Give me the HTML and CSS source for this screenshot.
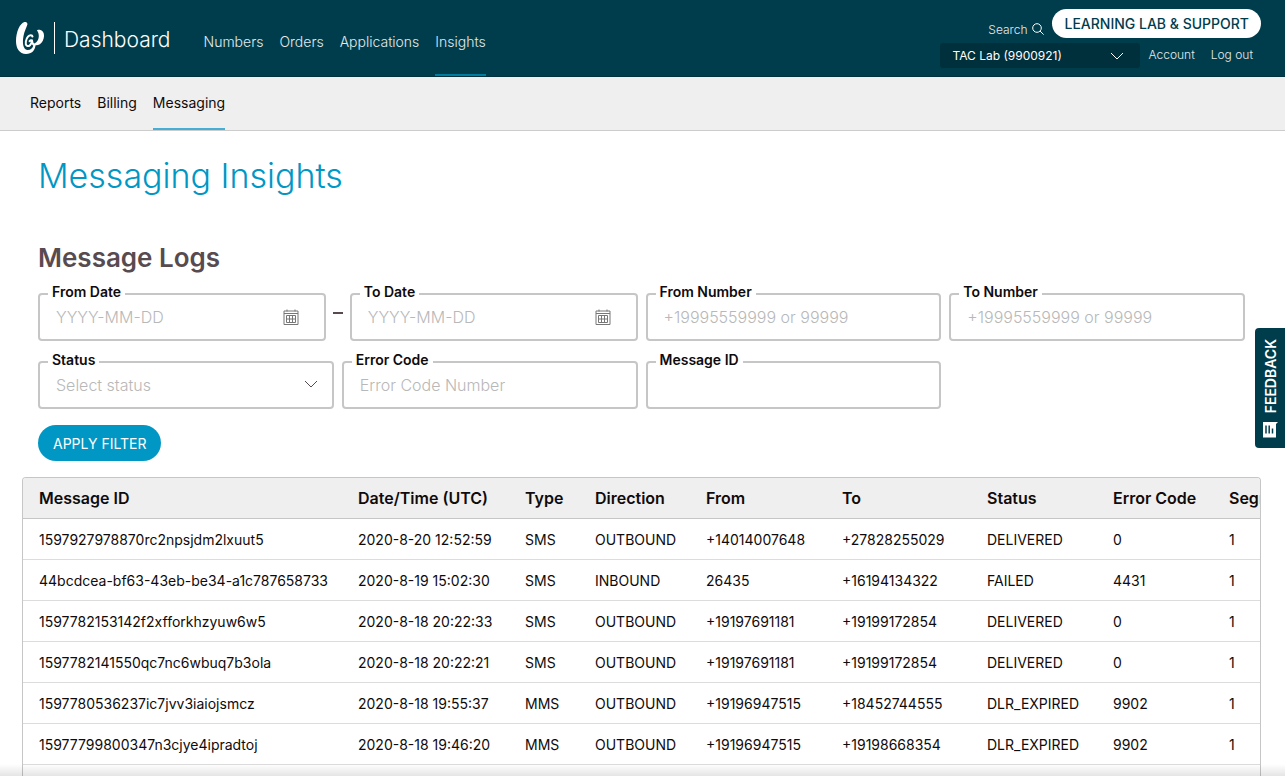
FILE: index.html
```html
<!DOCTYPE html>
<html lang="en">
<head>
<meta charset="utf-8">
<meta name="viewport" content="width=device-width, initial-scale=1">
<title>Messaging Insights</title>
<link rel="stylesheet" href="styles.css">
</head>
<body>
<header class="topbar">
  <a class="brand" href="#">
    <svg class="brand-logo" viewBox="0 0 30 34" aria-hidden="true">
      <path fill="#fff" d="M9.500 1C5 2 1 11 1 20c0 7.500 3.500 13 10 13 6 0 9.300-4 9.500-9h-2c-.8 3.500-3.500 5.300-6.200 5-4.300-.8-5.100-7-3.800-14 .9-5 3.100-8.500 3.900-11.500C12.600 1.500 11.500.6 9.500 1z"/>
      <path fill="#fff" d="M22 9.500c2.400 3 2.300 7.500.3 10.500-1.200 1.800-2.800 2.800-4.800 3.200 3.500 2.300 8.200.8 10.200-3.200 2.600-5 1.300-10.700-2.900-11.300-1.400-.2-2.800 0-2.800.8z"/>
      <path fill="none" stroke="#fff" stroke-width="2" stroke-linecap="round" d="M17.500 15.500c-.3-1.700-2.800-1.800-4.500.2-2.200 2.500-3.200 7.600-1.200 9 2 1.300 4.700-1 5.200-5.200-.8-.3-1.800 0-2.400.7M17 19.500c.2 2.500.2 3.800 2.500 4.500"/>
    </svg>
    <span class="brand-name">Dashboard</span>
  </a>
  <nav class="main-nav" aria-label="Main">
    <a href="#">Numbers</a>
    <a href="#">Orders</a>
    <a href="#">Applications</a>
    <a class="active" href="#">Insights</a>
  </nav>
  <div class="tools">
    <div class="tools-row">
      <a class="search" href="#">Search
        <svg class="search-icon" viewBox="0 0 12 12" aria-hidden="true"><circle cx="5" cy="5" r="4.300"/><path d="M8 8l3.600 3.600"/></svg>
      </a>
      <button class="support" type="button">LEARNING LAB &amp; SUPPORT</button>
    </div>
    <div class="tools-row account-row">
      <div class="account-picker">
        <select aria-label="Account"><option>TAC Lab (9900921)</option></select>
        <svg class="chevron" viewBox="0 0 14 8" aria-hidden="true"><path d="M1 1l6 6 6-6"/></svg>
      </div>
      <a href="#">Account</a>
      <a class="logout" href="#">Log out</a>
    </div>
  </div>
</header>

<nav class="sub-nav" aria-label="Insights">
  <a href="#">Reports</a>
  <a href="#">Billing</a>
  <a class="active" href="#">Messaging</a>
</nav>

<main class="content">
  <h1>Messaging Insights</h1>
  <h2>Message Logs</h2>

  <form class="filters">
    <div class="date-range">
      <div class="field">
        <label for="from-date">From Date</label>
        <input id="from-date" type="text" placeholder="YYYY-MM-DD">
        <button class="calendar" type="button" aria-label="Pick from date">
          <svg viewBox="0 0 16 16" aria-hidden="true"><path d="M1 2h14v13.500H1zM1 4.500h14M4 .5v2M12 .5v2M3.500 6.500h9v7h-9zM3.500 10h9M6.500 6.500v7M9.500 6.500v7"/></svg>
        </button>
      </div>
      <span class="dash"></span>
      <div class="field">
        <label for="to-date">To Date</label>
        <input id="to-date" type="text" placeholder="YYYY-MM-DD">
        <button class="calendar" type="button" aria-label="Pick to date">
          <svg viewBox="0 0 16 16" aria-hidden="true"><path d="M1 2h14v13.500H1zM1 4.500h14M4 .5v2M12 .5v2M3.500 6.500h9v7h-9zM3.500 10h9M6.500 6.500v7M9.500 6.500v7"/></svg>
        </button>
      </div>
    </div>
    <div class="field">
      <label for="from-number">From Number</label>
      <input id="from-number" type="text" placeholder="+19995559999 or 99999">
    </div>
    <div class="field">
      <label for="to-number">To Number</label>
      <input id="to-number" type="text" placeholder="+19995559999 or 99999">
    </div>
    <div class="field">
      <label for="status">Status</label>
      <select id="status"><option>Select status</option></select>
      <svg class="chevron" viewBox="0 0 14 8" aria-hidden="true"><path d="M1 1l6 6 6-6"/></svg>
    </div>
    <div class="field">
      <label for="error-code">Error Code</label>
      <input id="error-code" type="text" placeholder="Error Code Number">
    </div>
    <div class="field">
      <label for="message-id">Message ID</label>
      <input id="message-id" type="text">
    </div>
    <button class="apply" type="submit">APPLY FILTER</button>
  </form>

  <div class="table-frame">
    <table>
      <colgroup>
        <col class="c-id"><col class="c-time"><col class="c-type"><col class="c-direction"><col class="c-from"><col class="c-to"><col class="c-status"><col class="c-error"><col class="c-segments">
      </colgroup>
      <thead>
        <tr><th>Message ID</th><th>Date/Time (UTC)</th><th>Type</th><th>Direction</th><th>From</th><th>To</th><th>Status</th><th>Error Code</th><th>Segments</th></tr>
      </thead>
      <tbody>
        <tr><td>1597927978870rc2npsjdm2lxuut5</td><td>2020-8-20 12:52:59</td><td>SMS</td><td>OUTBOUND</td><td>+14014007648</td><td>+27828255029</td><td>DELIVERED</td><td>0</td><td>1</td></tr>
        <tr><td>44bcdcea-bf63-43eb-be34-a1c787658733</td><td>2020-8-19 15:02:30</td><td>SMS</td><td>INBOUND</td><td>26435</td><td>+16194134322</td><td>FAILED</td><td>4431</td><td>1</td></tr>
        <tr><td>1597782153142f2xfforkhzyuw6w5</td><td>2020-8-18 20:22:33</td><td>SMS</td><td>OUTBOUND</td><td>+19197691181</td><td>+19199172854</td><td>DELIVERED</td><td>0</td><td>1</td></tr>
        <tr><td>1597782141550qc7nc6wbuq7b3ola</td><td>2020-8-18 20:22:21</td><td>SMS</td><td>OUTBOUND</td><td>+19197691181</td><td>+19199172854</td><td>DELIVERED</td><td>0</td><td>1</td></tr>
        <tr><td>1597780536237ic7jvv3iaiojsmcz</td><td>2020-8-18 19:55:37</td><td>MMS</td><td>OUTBOUND</td><td>+19196947515</td><td>+18452744555</td><td>DLR_EXPIRED</td><td>9902</td><td>1</td></tr>
        <tr><td>15977799800347n3cjye4ipradtoj</td><td>2020-8-18 19:46:20</td><td>MMS</td><td>OUTBOUND</td><td>+19196947515</td><td>+19198668354</td><td>DLR_EXPIRED</td><td>9902</td><td>1</td></tr>
      </tbody>
    </table>
  </div>
</main>

<button class="feedback" type="button">
  <svg class="feedback-icon" viewBox="0 0 16 17" aria-hidden="true"><path fill="#fff" d="M1 1h15l-2 2v13.500H1z"/><path stroke="#003d4c" stroke-width="1.500" fill="none" d="M4 4.500v8M7.200 4.500v8M10.500 7.500v5"/></svg>
  <span class="feedback-text">FEEDBACK</span>
</button>
<div class="bottom-shade"></div>
</body>
</html>
```
FILE: styles.css
```css
* { box-sizing: border-box; }

body {
  margin: 0;
  height: 100vh;
  display: flex;
  flex-direction: column;
  overflow: hidden;
  background: #fff;
  color: #0f0b0c;
  font-family: Inter, "Open Sans", sans-serif;
  font-size: 14px;
}

a { color: inherit; text-decoration: none; }
button, input, select { font: inherit; margin: 0; }
button { cursor: pointer; }

.topbar {
  flex: none;
  display: flex;
  height: 77px;
  padding: 0 24px 0 15px;
  background: #003d4c;
  border-bottom: 1px solid #00313d;
  color: #e3eaec;
}

.brand { display: flex; align-items: center; }
.brand-logo { width: 30px; height: 34px; }
.brand-name {
  margin-left: 9px;
  padding: 4px 0 0 9px;
  border-left: 1px solid #fff;
  font-size: 21px;
  line-height: 28px;
  font-weight: 300;
  color: #fff;
}

.main-nav { display: flex; gap: 16px; margin-left: 33px; }
.main-nav a {
  padding-top: 32px;
  border-bottom: 2px solid transparent;
  font-weight: 300;
  line-height: 20px;
}
.main-nav .active { border-color: #007c9e; }

.tools { margin-left: auto; padding-top: 9px; font-size: 12px; font-weight: 300; }
.tools-row { display: flex; justify-content: flex-end; }
.search { display: flex; align-items: center; gap: 5px; margin-right: 8px; padding-top: 11px; }
.search-icon { width: 12px; height: 12px; fill: none; stroke: #fff; }
.support {
  height: 29px;
  padding: 0 12px;
  border: 0;
  border-radius: 15px;
  background: #fff;
  color: #003d4c;
  font-size: 14px;
  font-weight: 500;
}
.account-row { gap: 8px; margin-top: 5px; padding-right: 8px; line-height: 24px; }
.logout { margin-left: 8px; }
.account-picker { position: relative; width: 200px; }
.account-picker select {
  display: block;
  width: 100%;
  height: 25px;
  padding: 0 12px;
  border: 0;
  border-radius: 3px;
  appearance: none;
  background: #00303b;
  color: #fff;
  font-weight: 400;
}
.chevron { width: 14px; height: 8px; fill: none; stroke: #fff; pointer-events: none; }
.account-picker .chevron { position: absolute; right: 16px; top: 9px; }

.sub-nav {
  flex: none;
  display: flex;
  gap: 16px;
  height: 54px;
  padding-left: 30px;
  background: #efefef;
  border-bottom: 1px solid #ccc;
}
.sub-nav a { padding-top: 16px; line-height: 20px; border-bottom: 2px solid transparent; }
.sub-nav .active { border-color: #46aed4; }

.content {
  flex: 1;
  min-height: 0;
  display: flex;
  flex-direction: column;
  padding: 24px 24px 0 22px;
}
h1, h2 { margin: 0 16px; }
h1 { color: #0097c4; font-size: 34px; font-weight: 300; line-height: 42px; }
h2 { margin-top: 44px; color: #584b4f; font-size: 26px; font-weight: 600; line-height: 34px; }

.filters {
  display: grid;
  grid-template-columns: repeat(4, 1fr);
  gap: 20px 8px;
  margin: 18px 16px 0;
}
.date-range { grid-column: span 2; display: flex; align-items: center; }
.date-range .field { flex: 1; }
.dash { width: 10px; height: 2px; margin: 0 7px 8px; background: #584b4f; }

.field { position: relative; }
.field label {
  position: absolute;
  left: 10px;
  top: -10px;
  padding: 0 4px;
  background: #fff;
  font-size: 14px;
  font-weight: 600;
  line-height: 18px;
}
.field input, .field select {
  display: block;
  width: 100%;
  height: 48px;
  padding: 0 16px;
  border: 2px solid #c6c6c6;
  border-radius: 4px;
  appearance: none;
  background: #fff;
  font-size: 16px;
  font-weight: 300;
}
.field select, .field input::placeholder { color: #b8b8b8; opacity: 1; }
.field .chevron { position: absolute; right: 16px; top: 19px; stroke: #584b4f; }
.calendar {
  position: absolute;
  right: 27px;
  top: 16px;
  width: 16px;
  height: 16px;
  padding: 0;
  border: 0;
  background: none;
}
.calendar svg { display: block; fill: none; stroke: #777; }

.apply {
  justify-self: start;
  grid-column: 1 / -1;
  height: 36px;
  margin-top: -4px;
  padding: 0 15px;
  border: 0;
  border-radius: 18px;
  background: #0097c4;
  color: #fff;
  font-size: 14px;
}

.table-frame {
  flex: 1;
  min-height: 0;
  margin-top: 16px;
  border: 1px solid #c6c6c6;
  border-bottom: 0;
  border-radius: 4px 4px 0 0;
  overflow: hidden;
}
table { width: 1306px; min-width: 100%; table-layout: fixed; border-collapse: separate; border-spacing: 0; }
th, td { height: 41px; padding: 0 0 0 16px; text-align: left; white-space: nowrap; }
th { background: #efefef; border-bottom: 1px solid #c6c6c6; font-size: 16px; font-weight: 600; }
td { border-bottom: 1px solid #dcdcdc; font-size: 14px; }
.c-id { width: 319px; }
.c-time { width: 167px; }
.c-type { width: 70px; }
.c-direction { width: 111px; }
.c-from { width: 136px; }
.c-to { width: 145px; }
.c-status { width: 126px; }
.c-error { width: 116px; }
.c-segments { width: 116px; }

.feedback {
  position: fixed;
  right: 0;
  top: 328px;
  display: flex;
  flex-direction: column-reverse;
  align-items: center;
  gap: 8px;
  width: 30px;
  height: 120px;
  padding: 0 0 10px;
  border: 0;
  border-radius: 4px 0 0 4px;
  background: #003d4c;
  color: #fff;
  font-size: 14px;
  font-weight: 600;
}
.feedback-icon { flex: none; width: 16px; height: 17px; }
.feedback-text { writing-mode: vertical-rl; transform: rotate(180deg); }

.bottom-shade {
  position: fixed;
  left: 0;
  right: 0;
  bottom: 0;
  height: 12px;
  background: linear-gradient(rgba(0, 0, 0, 0), rgba(0, 0, 0, .1));
  pointer-events: none;
}
```
